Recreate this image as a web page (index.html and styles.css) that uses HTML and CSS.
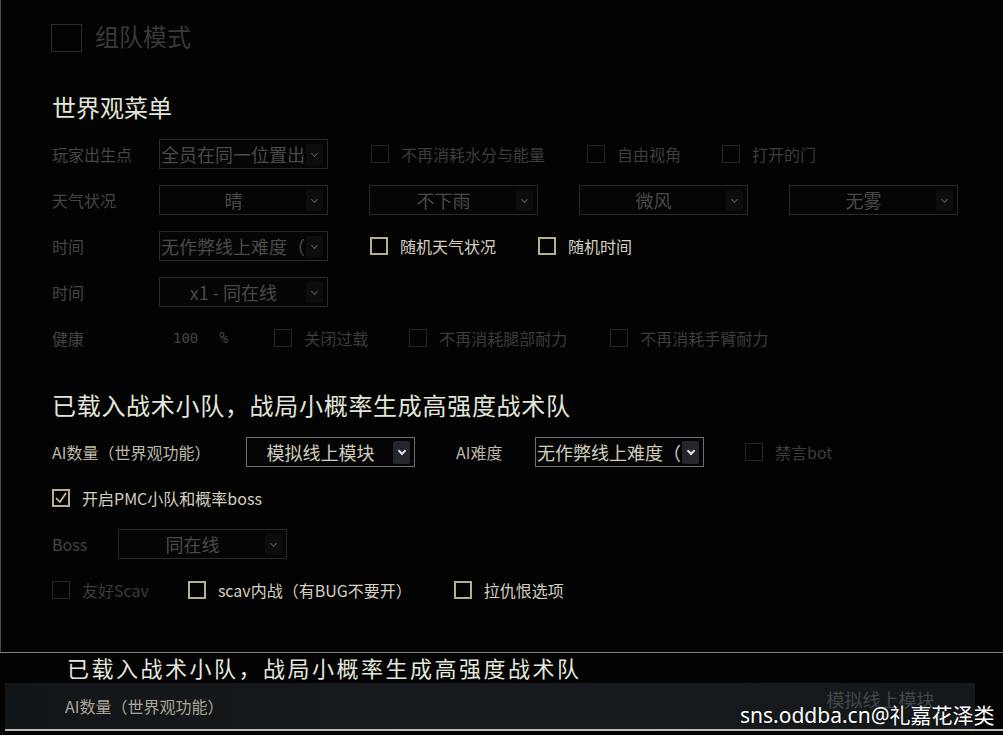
FILE: index.html
```html
<!DOCTYPE html>
<html lang="zh-CN">
<head>
  <meta charset="UTF-8">
  <title>世界观菜单</title>
  <link rel="stylesheet" href="styles.css">
</head>
<body>
  <div class="screen">
    <div class="panel">
      <div class="team-row">
        <span class="team-box"></span>
        <span class="team-label">组队模式</span>
      </div>

      <h2 class="section-title">世界观菜单</h2>

      <div class="row">
        <span class="label">玩家出生点</span>
        <div class="select"><span class="select-text left">全员在同一位置出</span><span class="arrow"></span></div>
        <label class="option sp-43"><span class="box"></span>不再消耗水分与能量</label>
        <label class="option sp-42"><span class="box"></span>自由视角</label>
        <label class="option sp-41"><span class="box"></span>打开的门</label>
      </div>

      <div class="row">
        <span class="label">天气状况</span>
        <div class="select"><span class="select-text">晴</span><span class="arrow"></span></div>
        <div class="select sp-41"><span class="select-text">不下雨</span><span class="arrow"></span></div>
        <div class="select sp-41"><span class="select-text">微风</span><span class="arrow"></span></div>
        <div class="select sp-41"><span class="select-text">无雾</span><span class="arrow"></span></div>
      </div>

      <div class="row">
        <span class="label">时间</span>
        <div class="select"><span class="select-text left">无作弊线上难度（</span><span class="arrow"></span></div>
        <label class="option on sp-42"><span class="box"></span>随机天气状况</label>
        <label class="option on sp-42"><span class="box"></span>随机时间</label>
      </div>

      <div class="row">
        <span class="label">时间</span>
        <div class="select"><span class="select-text">x1 - 同在线</span><span class="arrow"></span></div>
      </div>

      <div class="row">
        <span class="label wide">健康</span>
        <span class="number">100</span>
        <span class="percent">%</span>
        <label class="option sp-46"><span class="box"></span>关闭过载</label>
        <label class="option sp-41"><span class="box"></span>不再消耗腿部耐力</label>
        <label class="option sp-43"><span class="box"></span>不再消耗手臂耐力</label>
      </div>

      <h2 class="squad-title">已载入战术小队，战局小概率生成高强度战术队</h2>

      <div class="row">
        <span class="label bright ai-label">AI数量（世界观功能）</span>
        <div class="select active"><span class="select-text">模拟线上模块</span><span class="arrow"></span></div>
        <span class="label bright diff-label">AI难度</span>
        <div class="select active"><span class="select-text left">无作弊线上难度（</span><span class="arrow"></span></div>
        <label class="option sp-41"><span class="box"></span>禁言bot</label>
      </div>

      <div class="row">
        <label class="option on first">
          <span class="box">
            <svg viewBox="0 0 18 18" width="18" height="18"><polyline points="4,9 8,13 14,4" fill="none" stroke="#cfc6a6" stroke-width="1.6"/></svg>
          </span>开启PMC小队和概率boss
        </label>
      </div>

      <div class="row">
        <span class="label boss-label">Boss</span>
        <div class="select"><span class="select-text">同在线</span><span class="arrow"></span></div>
      </div>

      <div class="row">
        <label class="option first"><span class="box"></span>友好Scav</label>
        <label class="option on sp-39"><span class="box"></span>scav内战（有BUG不要开）</label>
        <label class="option on sp-42"><span class="box"></span>拉仇恨选项</label>
      </div>
    </div>

    <div class="lower">
      <div class="lower-title">已载入战术小队，战局小概率生成高强度战术队</div>
      <div class="lower-row">
        <span class="lower-label">AI数量（世界观功能）</span>
        <span class="lower-value">模拟线上模块</span>
      </div>
      <div class="lower-line"></div>
    </div>

    <div class="watermark">sns.oddba.cn@礼嘉花泽类</div>
  </div>
</body>
</html>
```

FILE: styles.css
```css
* {
  margin: 0;
  padding: 0;
  box-sizing: border-box;
}

body {
  background-color: #030303;
  font-family: "Noto Sans CJK SC", "Noto Sans", sans-serif;
  color: #3e3e3e;
  overflow: hidden;
}

.screen {
  position: relative;
  width: 1003px;
  height: 735px;
  overflow: hidden;
}

.panel {
  height: 653px;
  padding: 24px 0 0 51px;
  border-left: 1px solid #474b4e;
  border-bottom: 1px solid #7d8286;
}

/* top checkbox */
.team-row {
  display: flex;
  align-items: center;
  height: 28px;
}

.team-box {
  width: 31px;
  height: 28px;
  border: 1px solid #2a2c2e;
  margin-left: -1px;
}

.team-label {
  margin-left: 13px;
  margin-top: -6px;
  font-size: 24px;
  color: #3a3a3a;
}

.section-title {
  margin-top: 39px;
  margin-bottom: 8px;
  font-size: 24px;
  line-height: 32px;
  font-weight: normal;
  color: #e2e6da;
}

.squad-title {
  margin-top: 28px;
  margin-bottom: 8px;
  font-size: 24px;
  line-height: 32px;
  font-weight: normal;
  letter-spacing: 0.7px;
  color: #e2e6da;
}

/* rows */
.row {
  display: flex;
  align-items: center;
  height: 46px;
  font-size: 16px;
}

.label {
  width: 107px;
  color: #454545;
  white-space: nowrap;
}

.label.wide {
  width: 121px;
}

.label.bright {
  color: #bcb8a8;
}

.ai-label {
  width: 194px;
}

.diff-label {
  width: 79px;
  margin-left: 41px;
}

.boss-label {
  width: 66px;
}

.number {
  font-family: "DejaVu Sans Mono", monospace;
  font-size: 14px;
  color: #444;
}

.percent {
  margin-left: 21px;
  font-family: "DejaVu Sans Mono", monospace;
  font-size: 15px;
  color: #444;
}

/* dropdowns */
.select {
  display: flex;
  align-items: center;
  width: 169px;
  height: 30px;
  border: 1px solid #262a2e;
  background-color: #050505;
  padding: 0 4px 0 1px;
}

.select-text {
  flex: 1;
  overflow: hidden;
  white-space: nowrap;
  text-align: center;
  font-size: 18px;
  color: #4a4a47;
}

.select-text.left {
  text-align: left;
}

.arrow {
  position: relative;
  width: 17px;
  height: 21px;
  background-color: #0b0d0f;
  border-radius: 2px;
  flex-shrink: 0;
}

.arrow::after {
  content: "";
  position: absolute;
  left: 6px;
  top: 7px;
  width: 4px;
  height: 4px;
  border-right: 1px solid #55585a;
  border-bottom: 1px solid #55585a;
  transform: rotate(45deg);
}

.select.active {
  border-color: #6b7073;
  background-color: #040404;
}

.select.active .select-text {
  color: #d2cebe;
}

.select.active .arrow {
  height: 23px;
  background-color: #23272d;
}

.select.active .arrow::after {
  border-color: #e0e0e0;
  border-width: 2px;
  left: 6px;
  top: 7px;
}

/* checkboxes */
.option {
  display: flex;
  align-items: center;
  white-space: nowrap;
  color: #3c3c3c;
}

.box {
  display: flex;
  width: 18px;
  height: 18px;
  margin-right: 12px;
  border: 1px solid #25282a;
}

.option.on {
  color: #d4d0c0;
}

.option.on .box {
  border: 2px solid #b7ae92;
}

.option.on .box svg {
  margin: -2px;
}

.first {
  margin-left: 0;
}

.sp-39 { margin-left: 39px; }
.sp-41 { margin-left: 41px; }
.sp-42 { margin-left: 42px; }
.sp-43 { margin-left: 43px; }
.sp-46 { margin-left: 46px; }

/* lower strip */
.lower {
  height: 82px;
  background-color: #030303;
}

.lower-title {
  height: 30px;
  padding-left: 67px;
  font-size: 22px;
  line-height: 28px;
  letter-spacing: 2.5px;
  color: #e4e8dc;
}

.lower-row {
  position: relative;
  display: flex;
  align-items: center;
  height: 46px;
  margin: 0 28px 0 5px;
  background: linear-gradient(90deg, #121518 0%, #181b1e 50%, #15181b 100%);
  padding-left: 60px;
  overflow: hidden;
}

.lower-label {
  font-size: 16px;
  color: #aaa696;
}

.lower-value {
  margin-left: 603px;
  margin-top: -14px;
  font-size: 18px;
  color: #40474c;
}

.lower-line {
  height: 2px;
  margin-left: 5px;
  background-color: #bdbdb5;
}

.watermark {
  position: absolute;
  left: 740px;
  top: 699px;
  font-family: "Noto Sans", "Noto Sans CJK SC", sans-serif;
  font-size: 21px;
  color: #ffffff;
  text-shadow: 0 0 2px rgba(0, 0, 0, 0.8);
  white-space: nowrap;
}
```
